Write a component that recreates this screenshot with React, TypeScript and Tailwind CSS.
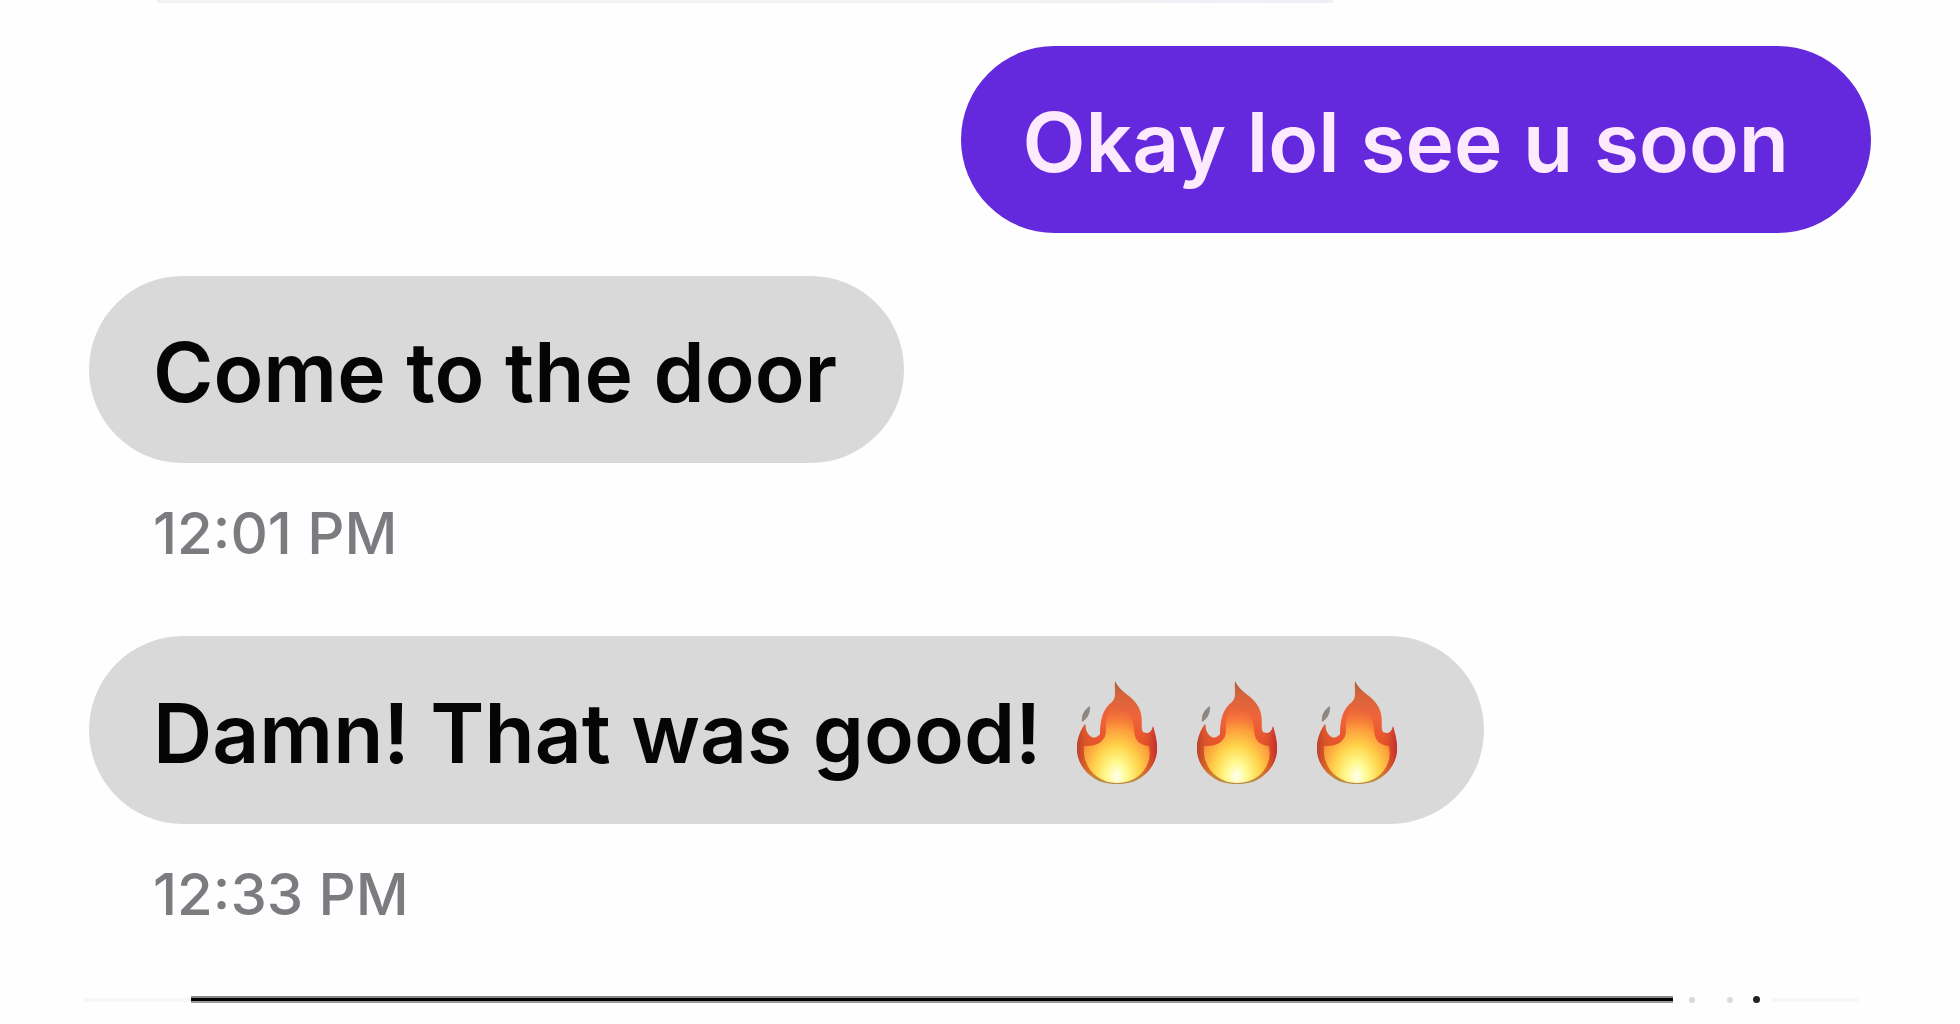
import React from "react";

function Flame({ id }: { id: string }) {
  return (
    <svg viewBox="0 0 80 104" className="h-[104px] w-20" aria-hidden="true">
      <defs>
        <linearGradient id={`${id}-body`} x1="0" y1="0" x2="0" y2="1">
          <stop offset="0" stopColor="#a8603f" />
          <stop offset="0.14" stopColor="#d9643a" />
          <stop offset="0.36" stopColor="#f0643a" />
          <stop offset="0.64" stopColor="#e4502a" />
          <stop offset="0.82" stopColor="#dd7420" />
          <stop offset="1" stopColor="#b98c46" />
        </linearGradient>
        <radialGradient id={`${id}-core`} cx="0.5" cy="0.92" r="0.78">
          <stop offset="0" stopColor="#fffff0" />
          <stop offset="0.2" stopColor="#fffa90" />
          <stop offset="0.45" stopColor="#ffd44c" />
          <stop offset="0.7" stopColor="#ffa63e" stopOpacity="0.9" />
          <stop offset="1" stopColor="#ff7e38" stopOpacity="0" />
        </radialGradient>
        <linearGradient id={`${id}-side`} x1="0" y1="0" x2="1" y2="0">
          <stop offset="0" stopColor="#b4402c" />
          <stop offset="0.22" stopColor="#f06a25" stopOpacity="0" />
          <stop offset="0.75" stopColor="#f06a25" stopOpacity="0" />
          <stop offset="1" stopColor="#c02c30" />
        </linearGradient>
      </defs>
      <path
        fill={`url(#${id}-body)`}
        d="M38 0C37 8 40 16 35 21C26 28 23 38 23 53C20 57 16 58 12 54C9 51 9 47 8 43C3 50 0 58 0 68C0 79 6 89 14 95C21 101 30 103 40 103C50 103 59 101 66 95C74 89 80 79 80 68C80 59 78 52 76 45C75 50 72 54 66 51C63 46 67 37 62 27C57 15 43 12 38 0Z"
      />
      <path
        fill={`url(#${id}-side)`}
        d="M23 53C20 57 16 58 12 54C9 51 9 47 8 43C3 50 0 58 0 68C0 79 6 89 14 95C21 101 30 103 40 103C50 103 59 101 66 95C74 89 80 79 80 68C80 59 78 52 76 45C75 50 72 54 66 51Z"
      />
      <path
        fill={`url(#${id}-core)`}
        d="M41 15C35 24 28 34 29 50C29 60 20 66 7 65C5 85 19 102 40 102C61 102 76 86 72 65C61 64 57 58 57 47C56 33 47 26 41 15Z"
      />
      <path fill="#8f8580" d="M13 25C13 33 11 37 5 41C4 34 7 29 13 25Z" />
    </svg>
  );
}

function Bubble({ sent = false, children }: { sent?: boolean; children: React.ReactNode }) {
  return (
    <div
      className={
        sent
          ? "flex items-center self-end rounded-full bg-[#6429dc] pt-[45px] pr-[82px] pb-[39px] pl-[62px] text-[#fdeaff]"
          : "flex items-center self-start rounded-full bg-[#d9d9d9] pt-[45px] pr-[67px] pb-[39px] pl-16 text-[#050505]"
      }
    >
      {children}
    </div>
  );
}

function Time({ children }: { children: string }) {
  return (
    <time className="mt-8 pl-16 text-[58px] leading-[76px] font-medium text-[#7b7b80]">{children}</time>
  );
}

export default function App() {
  return (
    <main className="flex min-h-screen flex-col overflow-hidden bg-[#fefefe] font-['Inter',sans-serif]">
      <div className="mr-[32%] ml-[8%] h-[3px] bg-linear-to-r from-[#f2f2f2] from-75% to-[#f0edf9]" />
      <section className="mt-[43px] flex flex-col pr-[89px] pl-[89px] text-[82px] leading-[103px] font-semibold">
        <Bubble sent>
          <p>Okay lol see u soon</p>
        </Bubble>
        <div className="mt-[43px] flex flex-col">
          <Bubble>
            <p>Come to the door</p>
          </Bubble>
          <Time>12:01 PM</Time>
        </div>
        <div className="mt-[65px] flex flex-col">
          <Bubble>
            <p>Damn! That was good!</p>
            <div role="img" aria-label="Three fire emojis" className="ml-9 flex gap-10 pr-5">
              <Flame id="flame-a" />
              <Flame id="flame-b" />
              <Flame id="flame-c" />
            </div>
          </Bubble>
          <Time>12:33 PM</Time>
        </div>
      </section>
      <div className="mt-16 flex items-center pr-[102px] pl-[84px]" aria-hidden="true">
        <span className="h-1 w-[107px] bg-[#f7f7f7]" />
        <span className="h-[7px] flex-1 border-t-2 border-b-2 border-t-[#888] border-b-[#999] bg-black" />
        <span className="ml-4 size-1.5 rounded-full bg-[#d5dcda]" />
        <span className="ml-8 size-1.5 rounded-full bg-[#d5dcda]" />
        <span className="ml-5 size-[7px] rounded-full bg-[#222]" />
        <span className="ml-3 h-1 w-[86px] bg-[#f7f7f7]" />
      </div>
    </main>
  );
}
